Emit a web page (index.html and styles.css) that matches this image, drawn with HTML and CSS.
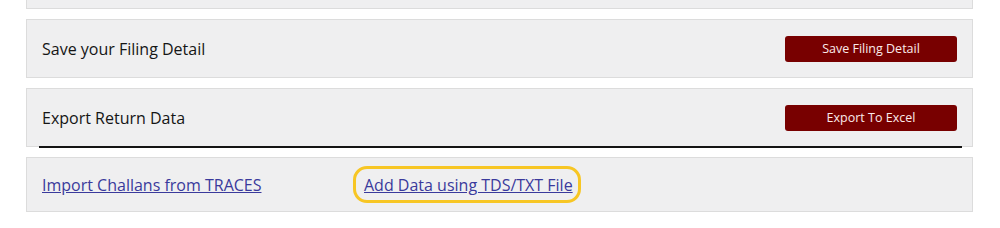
FILE: index.html
```html
<!DOCTYPE html>
<html lang="en">
<head>
    <meta charset="UTF-8">
    <meta name="viewport" content="width=device-width, initial-scale=1.0">
    <title>Filing</title>
    <link rel="stylesheet" href="styles.css">
</head>
<body>
    <div class="wrap">
        <div class="panel panel-cut"></div>

        <div class="panel">
            <span class="label">Save your Filing Detail</span>
            <button class="btn">Save Filing Detail</button>
        </div>

        <div class="panel panel-last">
            <span class="label">Export Return Data</span>
            <button class="btn">Export To Excel</button>
        </div>
        <hr class="rule">

        <div class="panel links">
            <div class="link-cell"><a href="#">Import Challans from TRACES</a></div>
            <div class="mark"><a href="#">Add Data using TDS/TXT File</a></div>
        </div>
    </div>
</body>
</html>
```

FILE: styles.css
```css
body{
    margin: 0;
    background: #fff;
    font-family: "Open Sans", "Noto Sans", sans-serif;
}
.wrap{
    width: 947px;
    margin-left: 26px;
}
.panel{
    display: flex;
    justify-content: space-between;
    align-items: center;
    height: 57px;
    padding: 0 15px 0 15px;
    background: #efeff0;
    border: 1px solid #dcdcdc;
    margin-bottom: 10px;
}
.panel-cut{
    height: 8px;
    border-top: none;
}
.panel-last{
    margin-bottom: 0;
}
.label{
    font-size: 16px;
    color: #151515;
}
.btn{
    width: 172px;
    height: 26px;
    border: none;
    border-radius: 3px;
    background: #780000;
    color: #fbeaea;
    font-family: "Open Sans", "Noto Sans", sans-serif;
    font-size: 12.5px;
    cursor: pointer;
}
.rule{
    height: 2px;
    margin: -1px 11px 9px 13px;
    border: none;
    background: #141414;
}
.links{
    justify-content: flex-start;
    height: 53px;
}
.link-cell{
    width: 311px;
}
.links a{
    color: #3a3a9c;
    font-size: 16px;
}
.mark{
    padding: 5px 5px 4px 8px;
    border: 3px solid #f7c624;
    border-radius: 14px;
}
```
